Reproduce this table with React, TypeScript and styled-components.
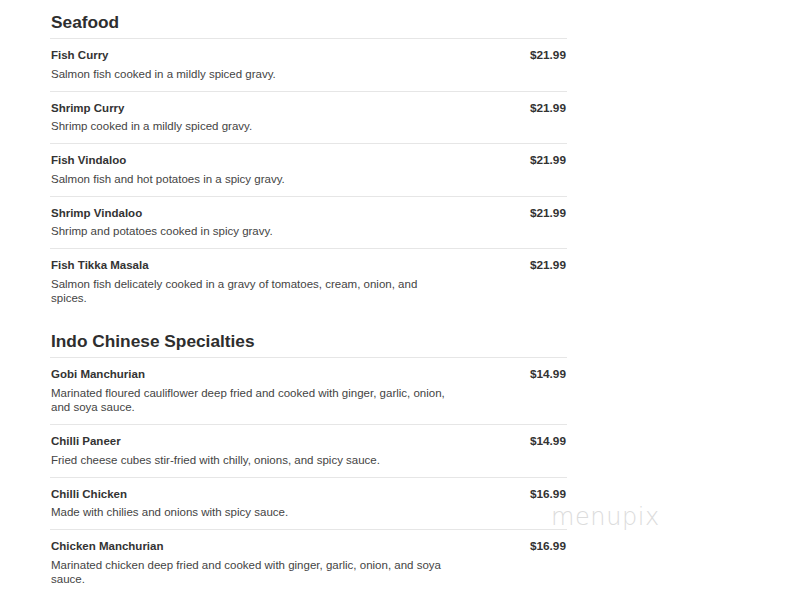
import React from "react";
import styled, { createGlobalStyle } from "styled-components";

const Global = createGlobalStyle`
  html, body { margin: 0; padding: 0; background: #fff; }
  body { font-family: "Liberation Sans", Arial, sans-serif; color: #333; }
`;

const Page = styled.div`
  position: relative;
  width: 786px;
  height: 601px;
  overflow: hidden;
  padding: 12px 0 0 50px;
  box-sizing: border-box;
`;

const Menu = styled.div`
  width: 517px;
  display: flex;
  flex-direction: column;
  gap: 16px;
`;

const Section = styled.section`
  display: flex;
  flex-direction: column;
`;

const Heading = styled.h2`
  margin: 0 0 6px 0;
  padding-left: 1px;
  font-size: 17.3px;
  line-height: 20px;
  font-weight: bold;
  color: #2e2e2e;
`;

const Row = styled.div`
  display: flex;
  justify-content: space-between;
  align-items: flex-start;
  border-top: 1px solid #e6e6e6;
  padding: 8px 0 9.5px 1px;
`;

const Info = styled.div`
  display: flex;
  flex-direction: column;
  gap: 3.5px;
  max-width: 402px;
`;

const Name = styled.div`
  font-size: 11.5px;
  line-height: 16px;
  font-weight: bold;
  color: #333;
`;

const Desc = styled.div`
  font-size: 11.5px;
  line-height: 14.5px;
  color: #444;
`;

const Price = styled.div`
  font-size: 11.8px;
  line-height: 16px;
  font-weight: bold;
  color: #333;
  padding-right: 1px;
`;

const Watermark = styled.div`
  position: absolute;
  left: 551px;
  top: 503px;
  font-family: "DejaVu Sans", sans-serif;
  font-weight: 200;
  font-size: 24px;
  letter-spacing: 0.6px;
  color: #dcdcdc;
`;

type Item = { name: string; desc: string; price: string };

const sections: { title: string; items: Item[] }[] = [
  {
    title: "Seafood",
    items: [
      { name: "Fish Curry", desc: "Salmon fish cooked in a mildly spiced gravy.", price: "$21.99" },
      { name: "Shrimp Curry", desc: "Shrimp cooked in a mildly spiced gravy.", price: "$21.99" },
      { name: "Fish Vindaloo", desc: "Salmon fish and hot potatoes in a spicy gravy.", price: "$21.99" },
      { name: "Shrimp Vindaloo", desc: "Shrimp and potatoes cooked in spicy gravy.", price: "$21.99" },
      {
        name: "Fish Tikka Masala",
        desc: "Salmon fish delicately cooked in a gravy of tomatoes, cream, onion, and spices.",
        price: "$21.99",
      },
    ],
  },
  {
    title: "Indo Chinese Specialties",
    items: [
      {
        name: "Gobi Manchurian",
        desc: "Marinated floured cauliflower deep fried and cooked with ginger, garlic, onion, and soya sauce.",
        price: "$14.99",
      },
      { name: "Chilli Paneer", desc: "Fried cheese cubes stir-fried with chilly, onions, and spicy sauce.", price: "$14.99" },
      { name: "Chilli Chicken", desc: "Made with chilies and onions with spicy sauce.", price: "$16.99" },
      {
        name: "Chicken Manchurian",
        desc: "Marinated chicken deep fried and cooked with ginger, garlic, onion, and soya sauce.",
        price: "$16.99",
      },
    ],
  },
];

export default function App() {
  return (
    <Page>
      <Global />
      <Menu>
        {sections.map((s) => (
          <Section key={s.title}>
            <Heading>{s.title}</Heading>
            {s.items.map((it) => (
              <Row key={it.name}>
                <Info>
                  <Name>{it.name}</Name>
                  <Desc>{it.desc}</Desc>
                </Info>
                <Price>{it.price}</Price>
              </Row>
            ))}
          </Section>
        ))}
      </Menu>
      <Watermark>menupix</Watermark>
    </Page>
  );
}
